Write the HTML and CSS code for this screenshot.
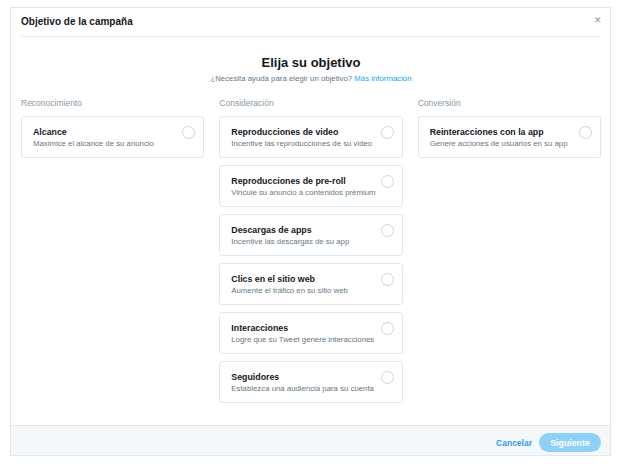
FILE: index.html
```html
<!DOCTYPE html>
<html>
<head>
    <title>Objetivo de la campaña</title>
    <link rel="stylesheet" href="styles.css">
</head>
<body>
    <div class="modal">
        <div class="head">
            <p class="head-title">Objetivo de la campaña</p>
            <span class="close">&#x2715;</span>
        </div>
        <!-- Body -->
        <div class="body">
            <p class="big">Elija su objetivo</p>
            <p class="help">¿Necesita ayuda para elegir un objetivo? <a href="#" class="link">Más información</a></p>
            <div class="cols">
                <div class="col">
                    <p class="label">Reconocimiento</p>
                    <div class="card">
                        <div>
                            <p class="t">Alcance</p>
                            <p class="d">Maximice el alcance de su anuncio</p>
                        </div>
                        <span class="radio"></span>
                    </div>
                </div>
                <div class="col">
                    <p class="label">Consideración</p>
                    <div class="card">
                        <div>
                            <p class="t">Reproducciones de video</p>
                            <p class="d">Incentive las reproducciones de su video</p>
                        </div>
                        <span class="radio"></span>
                    </div>
                    <div class="card">
                        <div>
                            <p class="t">Reproducciones de pre-roll</p>
                            <p class="d">Vincule su anuncio a contenidos prémium</p>
                        </div>
                        <span class="radio"></span>
                    </div>
                    <div class="card">
                        <div>
                            <p class="t">Descargas de apps</p>
                            <p class="d">Incentive las descargas de su app</p>
                        </div>
                        <span class="radio"></span>
                    </div>
                    <div class="card">
                        <div>
                            <p class="t">Clics en el sitio web</p>
                            <p class="d">Aumente el tráfico en su sitio web</p>
                        </div>
                        <span class="radio"></span>
                    </div>
                    <div class="card">
                        <div>
                            <p class="t">Interacciones</p>
                            <p class="d">Logre que su Tweet genere interacciones</p>
                        </div>
                        <span class="radio"></span>
                    </div>
                    <div class="card">
                        <div>
                            <p class="t">Seguidores</p>
                            <p class="d">Establezca una audiencia para su cuenta</p>
                        </div>
                        <span class="radio"></span>
                    </div>
                </div>
                <div class="col">
                    <p class="label">Conversión</p>
                    <div class="card">
                        <div>
                            <p class="t">Reinteracciones con la app</p>
                            <p class="d">Genere acciones de usuarios en su app</p>
                        </div>
                        <span class="radio"></span>
                    </div>
                </div>
            </div>
        </div>
        <div class="foot">
            <a href="#" class="cancel">Cancelar</a>
            <button class="next">Siguiente</button>
        </div>
    </div>
</body>
</html>
```

FILE: styles.css
```css
body {
    margin: 0;
    background-color: #fff;
    font-family: "Liberation Sans", Arial, sans-serif;
    color: #14171a;
}
p {
    margin: 0;
}
.modal {
    width: 601px;
    box-sizing: border-box;
    margin: 7px 0 0 10px;
    border: 1px solid #e1e8ed;
    background-color: #fff;
}
.head {
    margin: 0 9px 0 10px;
    padding: 7px 0 7px 0;
    border-bottom: 1px solid #e1e8ed;
    display: flex;
    justify-content: space-between;
    align-items: center;
}
.head-title {
    font-size: 10px;
    line-height: 14px;
    font-weight: bold;
}
.close {
    font-size: 9px;
    color: #8899a6;
    margin-right: -1px;
    margin-top: -5px;
}
.body {
    padding: 18px 9px 22px 10px;
}
.big {
    text-align: center;
    font-size: 13px;
    line-height: 16px;
    font-weight: bold;
}
.help {
    text-align: center;
    font-size: 7.8px;
    line-height: 11px;
    margin-top: 2px;
    color: #657786;
}
.link {
    color: #1da1f2;
    text-decoration: none;
}
.cols {
    display: grid;
    grid-template-columns: 1fr 1fr 1fr;
    column-gap: 15px;
    margin-top: 14px;
}
.col {
    display: flex;
    flex-direction: column;
    gap: 7px;
}
.label {
    font-size: 8.5px;
    line-height: 11px;
    color: #8899a6;
}
.card {
    border: 1px solid #e1e8ed;
    border-radius: 3px;
    padding: 9px 8px 8px 11px;
    display: flex;
    justify-content: space-between;
    align-items: flex-start;
}
.t {
    font-size: 8.8px;
    line-height: 13px;
    font-weight: bold;
}
.d {
    font-size: 7.8px;
    line-height: 10px;
    color: #657786;
}
.radio {
    width: 13px;
    height: 13px;
    box-sizing: border-box;
    border: 1px solid #ccd6dd;
    border-radius: 50%;
}
.foot {
    border-top: 1px solid #e1e8ed;
    background-color: #f5f8fa;
    padding: 7px 9px 3px 10px;
    display: flex;
    justify-content: flex-end;
    align-items: center;
    gap: 7px;
}
.cancel {
    font-size: 8.5px;
    font-weight: bold;
    color: #2b9fe6;
    text-decoration: none;
}
.next {
    height: 19px;
    width: 62px;
    border: none;
    border-radius: 10px;
    background-color: #8fd0f8;
    color: #fff;
    font-family: "Liberation Sans", Arial, sans-serif;
    font-size: 8.8px;
    font-weight: bold;
    padding: 0;
}
```
